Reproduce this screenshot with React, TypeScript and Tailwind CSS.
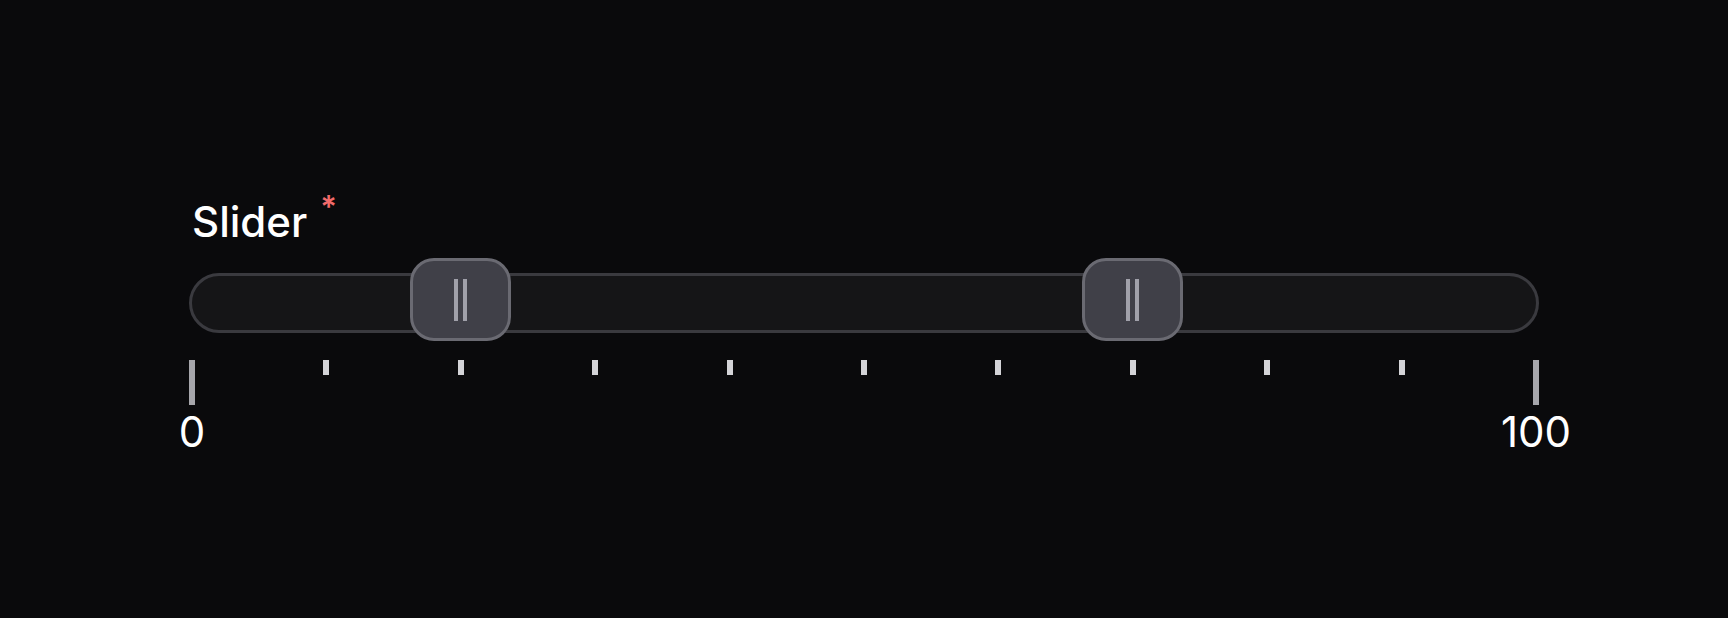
import React from "react";

const MIN = 0;
const MAX = 100;
const values = [20, 70];
const TICKS = Array.from({ length: 11 }, (_, i) => i);

// Track is 1350px wide; tick centres run from 3px to 1347px (1344px span).
function thumbLeft(v: number) {
  const pct = (v - MIN) / (MAX - MIN);
  return 3 + 1344 * pct - 50.5;
}

function Thumb({ value }: { value: number }) {
  return (
    <div
      role="slider"
      aria-valuemin={MIN}
      aria-valuemax={MAX}
      aria-valuenow={value}
      className="absolute top-[-15px] flex h-[83px] w-[101px] items-center justify-center gap-[5px] rounded-[24px] border-[3px] border-[#6a6a72] bg-[#404048]"
      style={{ left: thumbLeft(value) }}
    >
      <span className="h-[42px] w-[4px] bg-[#a1a1aa]" />
      <span className="h-[42px] w-[4px] bg-[#a1a1aa]" />
    </div>
  );
}

export default function App() {
  return (
    <div
      className="min-h-screen bg-[#0a0a0c] pl-[189px] pt-[201px] text-white"
      style={{ fontFamily: "Inter, 'Noto Sans', sans-serif" }}
    >
      <div className="w-[1350px]">
        <div className="flex items-start pl-[3px]">
          <span className="text-[42px] leading-[42px] font-medium">Slider</span>
          <span className="ml-[13px] mt-[-10px] text-[31px] leading-[31px] font-semibold text-[#f26b6b]">*</span>
        </div>

        <div className="relative mt-[30px]">
          <div className="h-[60px] w-full rounded-full border-[3px] border-[#3a3a3f] bg-[#151517]" />
          {values.map((v) => (
            <Thumb key={v} value={v} />
          ))}
        </div>

        <div className="mt-[27px] flex justify-between">
          {TICKS.map((i) => {
            const major = i === 0 || i === TICKS.length - 1;
            return (
              <div key={i} className="flex w-[6px] flex-col items-center">
                {major ? (
                  <>
                    <span className="h-[45px] w-[6px] bg-[#a6a6ab]" />
                    <span className="mt-[6px] whitespace-nowrap text-[42px] leading-[42px] font-normal">
                      {i === 0 ? MIN : MAX}
                    </span>
                  </>
                ) : (
                  <span className="h-[15px] w-[6px] bg-[#d4d4d8]" />
                )}
              </div>
            );
          })}
        </div>
      </div>
    </div>
  );
}
